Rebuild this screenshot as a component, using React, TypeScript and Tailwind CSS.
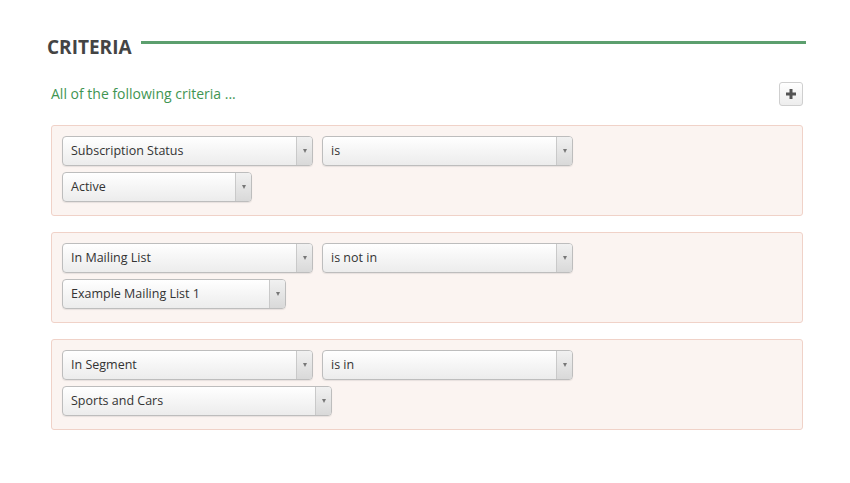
import React from "react";

interface Criterion {
  field: string;
  operator: string;
  value: string;
  valueWidth: string;
}

const criteria: Criterion[] = [
  {
    field: "Subscription Status",
    operator: "is",
    value: "Active",
    valueWidth: "w-[190px]",
  },
  {
    field: "In Mailing List",
    operator: "is not in",
    value: "Example Mailing List 1",
    valueWidth: "w-[224px]",
  },
  {
    field: "In Segment",
    operator: "is in",
    value: "Sports and Cars",
    valueWidth: "w-[270px]",
  },
];

const Select: React.FC<{ label: string; width: string }> = ({ label, width }) => (
  <div
    className={`${width} h-[30px] flex rounded-[4px] border border-[#bdbdbd] bg-gradient-to-b from-white to-[#ececec] shadow-[0_1px_1px_rgba(0,0,0,0.08)] overflow-hidden`}
  >
    <div className="flex-1 flex items-center pl-[8px] text-[12.5px] text-[#333] truncate">
      {label}
    </div>
    <div className="w-[16px] flex items-center justify-center border-l border-[#c9c9c9] bg-gradient-to-b from-[#f1f1f1] to-[#d9d9d9]">
      <span className="block w-0 h-0 border-l-[2.5px] border-r-[2.5px] border-t-[4px] border-l-transparent border-r-transparent border-t-[#777]" />
    </div>
  </div>
);

export default function App() {
  return (
    <div className="w-[850px] h-[483px] bg-white font-['Open_Sans',sans-serif]">
      <div className="pl-[47px] pr-[44px] pt-[34px]">
        <div className="flex items-start">
          <h2 className="text-[19px] leading-[26px] font-bold text-[#444]">
            CRITERIA
          </h2>
          <div className="flex-1 ml-[9px] mt-[7px] h-[3px] bg-[#5c9f6e]" />
        </div>

        <div className="pl-[4px] pr-[3px]">
          <div className="flex items-center justify-between mt-[20px]">
            <span className="text-[14px] text-[#3f9552]">
              All of the following criteria ...
            </span>
            <button className="w-[24px] h-[24px] flex items-center justify-center rounded-[3px] border border-[#cfcfcf] bg-gradient-to-b from-white to-[#ededed] mt-[2px]">
              <svg width="12" height="12" viewBox="0 0 12 12">
                <rect x="4.5" y="1" width="3" height="10" fill="#555" />
                <rect x="1" y="4.5" width="10" height="3" fill="#555" />
              </svg>
            </button>
          </div>

          <div className="mt-[19px] flex flex-col gap-[16px]">
            {criteria.map((item, idx) => (
              <div
                key={idx}
                className="border border-[#f0d2c8] rounded-[3px] bg-[#fbf4f1] pt-[10px] pb-[13px] px-[10px]"
              >
                <div className="flex gap-[9px]">
                  <Select label={item.field} width="w-[251px]" />
                  <Select label={item.operator} width="w-[251px]" />
                </div>
                <div className="mt-[6px]">
                  <Select label={item.value} width={item.valueWidth} />
                </div>
              </div>
            ))}
          </div>
        </div>
      </div>
    </div>
  );
}
